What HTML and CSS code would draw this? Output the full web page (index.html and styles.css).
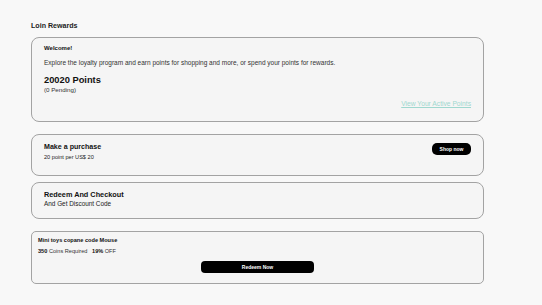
FILE: index.html
```
<!DOCTYPE html>
<html>
<head>
<meta charset="utf-8">
<link rel="stylesheet" href="styles.css">
</head>
<body>
<div class="page">
  <h1 class="page-title">Loin Rewards</h1>

  <section class="card card-welcome">
    <div class="welcome">Welcome!</div>
    <p class="explore">Explore the loyalty program and earn points for shopping and more, or spend your points for rewards.</p>
    <div class="points">20020 Points</div>
    <div class="pending">(0 Pending)</div>
    <div class="link-row"><a class="active-link" href="#">View Your Active Points</a></div>
  </section>

  <section class="card card-purchase">
    <div class="col">
      <div class="card-title">Make a purchase</div>
      <div class="card-sub small">20 point per US$ 20</div>
    </div>
    <button class="btn btn-shop">Shop now</button>
  </section>

  <section class="card card-redeem">
    <div class="card-title">Redeem And Checkout</div>
    <div class="card-sub">And Get Discount Code</div>
  </section>

  <section class="card card-coupon">
    <div class="coupon-title">Mini toys copane code Mouse</div>
    <div class="coupon-sub"><b>350</b> Coins Required <b class="off">19%</b> OFF</div>
    <div class="btn-row"><button class="btn btn-redeem">Redeem Now</button></div>
  </section>
</div>
</body>
</html>
```
FILE: styles.css
```
html, body {
  margin: 0;
  padding: 0;
  background: #f8f8f8;
}
body {
  font-family: "Liberation Sans", Arial, sans-serif;
  color: #111;
}
.page {
  width: 453px;
  padding: 21px 0 0 31px;
}
.page-title {
  margin: 0 0 6px;
  font-size: 7.1px;
  line-height: 10px;
  font-weight: bold;
  color: #222;
}
.card {
  box-sizing: border-box;
  background: #f5f5f5;
  border: 1px solid #a3a3a3;
  border-radius: 8px;
}
.card-welcome {
  height: 85px;
  padding: 6px 12px 0;
}
.welcome {
  font-size: 6px;
  line-height: 8px;
  font-weight: bold;
}
.explore {
  margin: 7px 0 0;
  font-size: 6.5px;
  line-height: 8px;
  color: #333;
}
.points {
  margin-top: 7px;
  font-size: 9.3px;
  line-height: 12px;
  font-weight: bold;
}
.pending {
  font-size: 6.2px;
  line-height: 8px;
  color: #333;
}
.link-row {
  display: flex;
  justify-content: flex-end;
  margin-top: 6px;
}
.active-link {
  font-size: 6.7px;
  line-height: 8px;
  color: #9fd8cf;
  text-decoration: underline;
}
.card-purchase {
  margin-top: 12px;
  height: 42px;
  padding: 7px 12px 0;
  display: flex;
  justify-content: space-between;
  align-items: flex-start;
}
.card-title {
  font-size: 7.1px;
  line-height: 10px;
  font-weight: bold;
}
.card-sub {
  margin-top: 1px;
  font-size: 6.2px;
  line-height: 8px;
  color: #222;
}
.card-sub.small {
  font-size: 5.6px;
}
.btn {
  border: 0;
  background: #000;
  color: #fff;
  font-family: "Liberation Sans", Arial, sans-serif;
  font-weight: bold;
  font-size: 5px;
  padding: 0;
  cursor: pointer;
}
.btn-shop {
  margin-top: 1px;
  width: 39px;
  height: 12px;
  border-radius: 5px;
}
.card-redeem {
  margin-top: 6px;
  height: 37px;
  padding: 7px 12px 0;
}
.card-redeem .card-title {
  font-size: 7.3px;
}
.card-redeem .card-sub {
  margin-top: 0;
  font-size: 6.4px;
}
.card-coupon {
  margin-top: 12px;
  height: 53px;
  border-radius: 5px;
  padding: 4px 6px 0;
}
.coupon-title {
  font-size: 5.6px;
  line-height: 8px;
  font-weight: bold;
}
.coupon-sub {
  margin-top: 3px;
  font-size: 5.6px;
  line-height: 8px;
  color: #333;
}
.coupon-sub b {
  color: #111;
}
.coupon-sub .off {
  margin-left: 3px;
}
.btn-row {
  display: flex;
  justify-content: center;
  margin-top: 6px;
}
.btn-redeem {
  width: 113px;
  height: 12px;
  border-radius: 4px;
}
```
